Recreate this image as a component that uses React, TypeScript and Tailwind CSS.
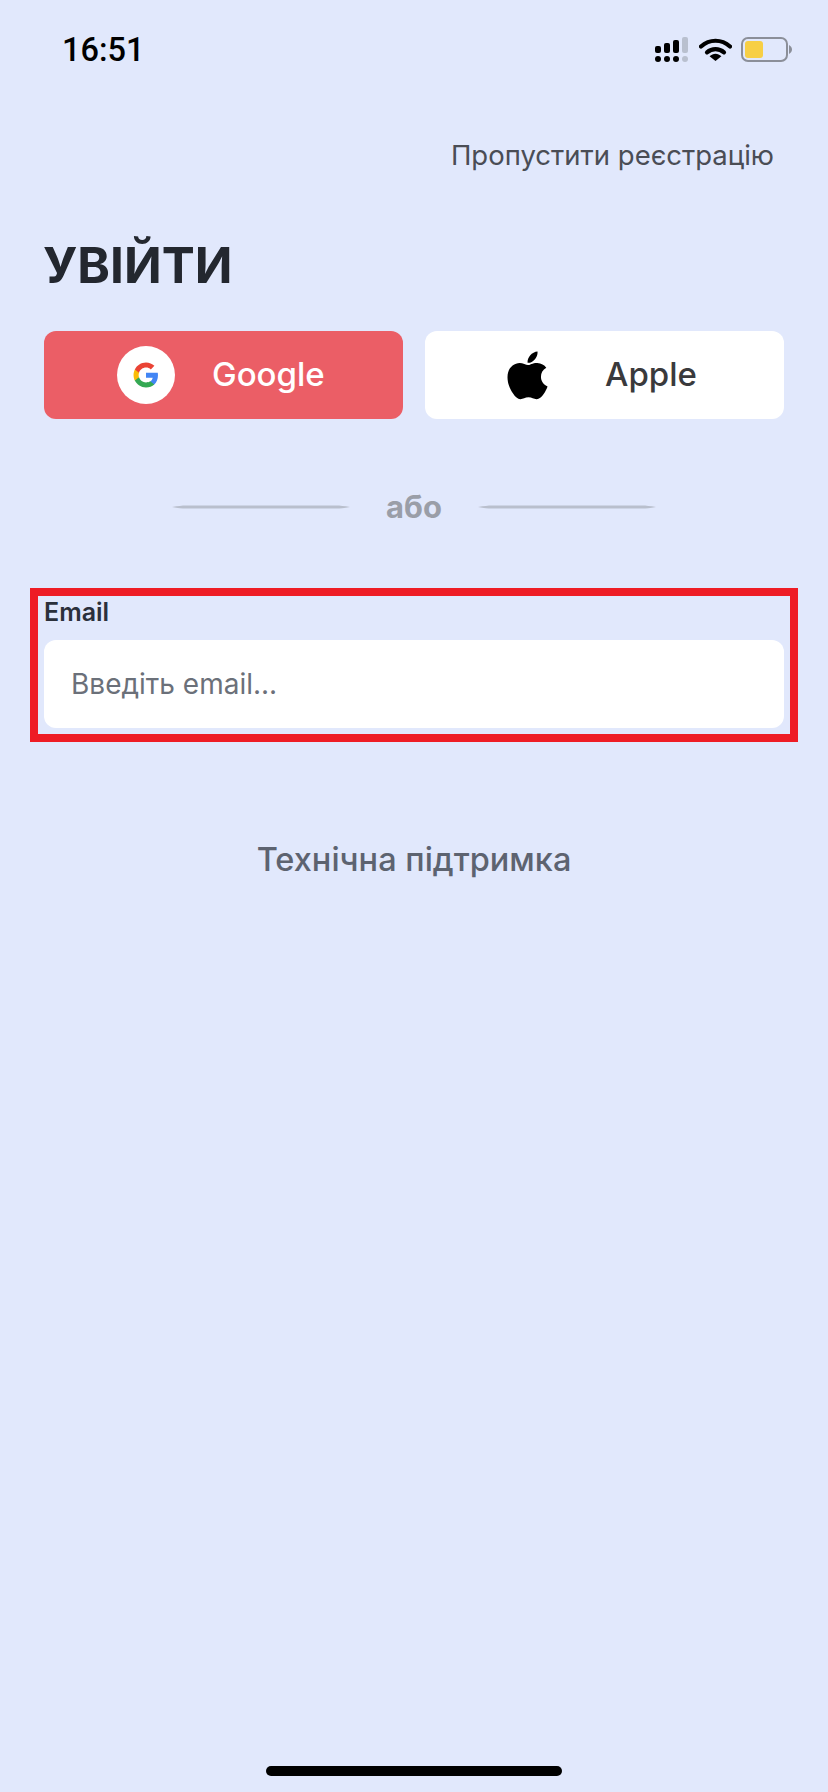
import { useState } from "react";

function SignalIcon() {
  return (
    <svg width="33" height="25" viewBox="0 0 33 25" fill="none">
      <rect x="0" y="9" width="6" height="7" rx="2" fill="#000" />
      <rect x="9" y="6" width="6" height="10" rx="2" fill="#000" />
      <rect x="18" y="3" width="6" height="13" rx="2" fill="#000" />
      <rect x="27" y="0" width="6" height="16" rx="2" fill="#b9c0cf" />
      <circle cx="3" cy="22" r="3" fill="#000" />
      <circle cx="12" cy="22" r="3" fill="#000" />
      <circle cx="21" cy="22" r="3" fill="#000" />
      <circle cx="30" cy="22" r="3" fill="#b9c0cf" />
    </svg>
  );
}

function WifiIcon() {
  return (
    <svg width="33" height="23" viewBox="0 0 33 23" fill="none">
      <path d="M2 8.5C10.5 0.8 22.5 0.8 31 8.5" stroke="#000" strokeWidth="4.2" strokeLinecap="round" />
      <path d="M8 14.3C13 10 20 10 25 14.3" stroke="#000" strokeWidth="4.2" strokeLinecap="round" />
      <path d="M10.6 18.2C14.2 14.8 18.8 14.8 22.4 18.2L16.5 23Z" fill="#000" />
    </svg>
  );
}

function BatteryIcon() {
  return (
    <div className="flex items-center">
      <div className="flex h-[25px] w-[47px] items-center rounded-[7px] border-[2px] border-[#8b8f99] p-[2px]">
        <div className="h-[17px] w-[18px] rounded-[3px] bg-[#f7cf45]" />
      </div>
      <svg className="ml-[1px]" width="3" height="9" viewBox="0 0 3 9">
        <path d="M0 0C2 1 3 3 3 4.5C3 6 2 8 0 9Z" fill="#8b8f99" />
      </svg>
    </div>
  );
}

function GoogleIcon() {
  return (
    <svg width="26" height="26" viewBox="0 0 48 48">
      <path fill="#4285F4" d="M46.1 24.5c0-1.6-.1-3.1-.4-4.5H24v9h12.4c-.5 2.9-2.2 5.300-4.600 6.900v5.800h7.500c4.300-4 6.800-9.900 6.800-17.200z" />
      <path fill="#34A853" d="M24 47c6.200 0 11.400-2 15.300-5.600l-7.500-5.800c-2.100 1.400-4.700 2.200-7.800 2.200-6 0-11.100-4-12.900-9.500H3.400v6C7.200 41.800 15 47 24 47z" />
      <path fill="#FBBC05" d="M11.100 28.300c-.5-1.400-.7-2.800-.7-4.300s.3-2.900.7-4.300v-6H3.400C1.900 16.800 1 20.300 1 24s.9 7.200 2.400 10.300l7.700-6z" />
      <path fill="#EA4335" d="M24 10.200c3.400 0 6.500 1.200 8.900 3.500l6.600-6.600C35.400 3.300 30.200 1 24 1 15 1 7.200 6.200 3.400 13.700l7.700 6c1.800-5.500 6.900-9.500 12.900-9.500z" />
    </svg>
  );
}

function AppleIcon() {
  return (
    <svg width="41" height="50" viewBox="0 0 384 470" fill="#000">
      <path d="M318.700 250.700c-.2-36.700 16.400-64.400 50-84.800-18.800-26.900-47.200-41.700-84.700-44.600-35.500-2.800-74.300 20.700-88.500 20.700-15 0-49.400-19.700-76.400-19.700C63.300 123.200 4 166.800 4 255.500c0 26.200 4.800 53.300 14.400 81.200 12.800 36.700 59 126.700 107.200 125.200 25.200-.6 43-17.900 75.800-17.900 31.800 0 48.300 17.900 76.400 17.900 48.600-.7 90.400-82.500 102.600-119.300-65.200-30.700-61.700-90-61.700-91.900z" />
      <path d="M262.100 86.500c27.300-32.400 24.800-61.900 24-72.500-24.100 1.400-52 16.400-67.900 34.900-17.500 19.800-27.800 44.300-25.600 71.900 26.100 2 49.900-11.400 69.500-34.300z" />
    </svg>
  );
}

/* Thin rule that tapers at both ends, as in the reference. */
function Rule() {
  return (
    <svg width="178" height="4" viewBox="0 0 178 4">
      <path d="M0 2C6 1 10 .5 14 .5H164C168 .5 172 1 178 2C172 3 168 3.500 164 3.500H14C10 3.500 6 3 0 2Z" fill="#b9bfcd" />
    </svg>
  );
}

export default function App() {
  const [email, setEmail] = useState("");

  return (
    <div className="flex min-h-[1792px] w-[828px] flex-col bg-[#e1e8fc] font-['Inter','Noto_Sans',sans-serif]">
      <div className="flex h-[100px] items-start justify-between pl-[62px] pr-[36px] pt-[31px]">
        <span className="font-['Roboto',sans-serif] text-[32.5px] leading-[38px] font-medium text-black">16:51</span>
        <div className="mt-[6px] flex items-center">
          <SignalIcon />
          <div className="ml-[11px]">
            <WifiIcon />
          </div>
          <div className="ml-[9px]">
            <BatteryIcon />
          </div>
        </div>
      </div>

      <div className="flex justify-end pr-[54px] pt-[39px]">
        <button className="text-[27.5px] leading-[32px] font-normal text-[#4a4d55]">Пропустити реєстрацію</button>
      </div>

      <h1 className="mt-[65px] pl-[43px] text-[49.5px] leading-[58px] font-bold text-[#23272f]">УВІЙТИ</h1>

      <div className="mt-[37px] grid grid-cols-2 gap-[22px] px-[44px]">
        <button className="flex h-[88px] items-center rounded-[12px] bg-[#eb5e66] pl-[73px]">
          <span className="flex h-[58px] w-[58px] items-center justify-center rounded-full bg-white">
            <GoogleIcon />
          </span>
          <span className="ml-[37px] text-[33px] font-medium text-white">Google</span>
        </button>
        <button className="flex h-[88px] items-center rounded-[12px] bg-white pl-[82px]">
          <AppleIcon />
          <span className="ml-[57px] text-[33px] font-medium text-[#3a3a3c]">Apple</span>
        </button>
      </div>

      <div className="mt-[65px] flex items-center justify-center gap-[36px]">
        <Rule />
        <span className="text-[31px] leading-[46px] font-bold text-[#9a9ea8]">або</span>
        <Rule />
      </div>

      <div className="mx-[30px] mt-[58px] flex h-[154px] flex-col border-[8px] border-[#ee1c25] px-[6px]">
        <label className="mt-[2px] text-[25px] leading-[28px] font-semibold text-[#2b303b]">Email</label>
        <input
          value={email}
          onChange={(e) => setEmail(e.target.value)}
          placeholder="Введіть email..."
          className="mt-[14px] h-[88px] w-full rounded-[12px] bg-white px-[27px] text-[28px] text-[#6b7079] outline-none placeholder:text-[#6b7079]"
        />
      </div>

      <div className="mt-[99px] text-center text-[32.5px] leading-[38px] font-medium text-[#5d6370]">
        Технічна підтримка
      </div>

      <div className="mt-auto flex justify-center pb-[16px]">
        <div className="h-[10px] w-[296px] rounded-full bg-black" />
      </div>
    </div>
  );
}
